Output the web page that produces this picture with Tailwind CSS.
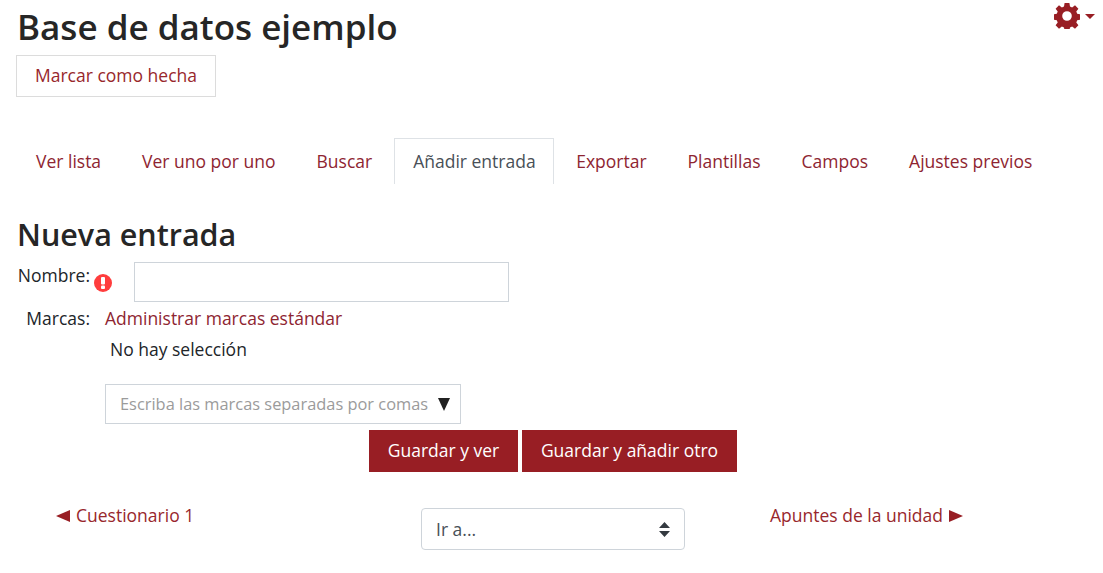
<!DOCTYPE html>
<html lang="es">
<head>
    <meta charset="UTF-8">
    <title>Base de datos ejemplo</title>
    <script src="https://cdn.jsdelivr.net/npm/@tailwindcss/browser@4"></script>
</head>
<body class="bg-white font-['Open_Sans',sans-serif] text-[17.5px] leading-[26px] text-[#212529] overflow-hidden">
<div class="w-[1103px] h-[573px] pl-[16px] relative">

    <!-- Activity menu -->
    <div class="absolute top-[3px] left-[1054px] flex items-center gap-[5px] text-[#981e24]">
        <svg class="w-[26px] h-[26px]" viewBox="0 0 26 26" fill="currentColor">
            <path fill-rule="evenodd" d="M10.6 0h4.8l.6 3.5 2.1.9 2.9-2.1 3.4 3.4-2.1 2.9.9 2.1 2.8.6v5.4l-2.8.6-.9 2.1 2.1 2.9-3.4 3.4-2.9-2.1-2.1.9-.6 3.5h-4.8l-.6-3.5-2.1-.9-2.9 2.1-3.4-3.4 2.1-2.9-.9-2.1-2.8-.6v-5.4l2.8-.6.9-2.1-2.1-2.9 3.4-3.4 2.9 2.1 2.1-.9zM13 8.2a4.8 4.8 0 1 0 0 9.6 4.8 4.8 0 0 0 0-9.6z"/>
        </svg>
        <span class="w-0 h-0 border-x-[5px] border-x-transparent border-t-[5px] border-t-[#981e24]"></span>
    </div>

    <h1 class="pt-[5px] pl-[1px] text-[35px] leading-[44px] font-semibold text-[#262626]">Base de datos ejemplo</h1>
    <a class="mt-[6px] flex items-center justify-center w-[200px] h-[42px] pb-[2px] border border-[#dcdcdc] text-[#98272c]">Marcar como hecha</a>

    <!-- Tabs -->
    <nav class="mt-[41px] flex h-[46px]">
        <a class="px-[20px] pt-[10px] text-[#8e2531]">Ver lista</a>
        <a class="px-[21px] pt-[10px] text-[#8e2531]">Ver uno por uno</a>
        <a class="px-[20px] pt-[10px] text-[#8e2531]">Buscar</a>
        <a class="w-[160px] pl-[18px] pt-[9px] ml-[2px] border border-b-0 border-[#dee2e6] text-[#495057]">Añadir entrada</a>
        <a class="px-[22px] pt-[10px] text-[#8e2531]">Exportar</a>
        <a class="px-[19px] pt-[10px] text-[#8e2531]">Plantillas</a>
        <a class="px-[22px] pt-[10px] text-[#8e2531]">Campos</a>
        <a class="px-[19px] pt-[10px] text-[#8e2531]">Ajustes previos</a>
    </nav>

    <h2 class="mt-[30px] pl-[1px] text-[30.5px] leading-[40px] font-semibold text-[#262626]">Nueva entrada</h2>

    <!-- Form -->
    <div class="mt-[8px] flex h-[40px]">
        <label class="w-[74px] text-right">Nombre:</label>
        <svg class="ml-[4px] mt-[12px] w-[18px] h-[18px]" viewBox="0 0 18 18">
            <circle cx="9" cy="9" r="9" fill="#ff3d3d"/>
            <rect x="7" y="3" width="4" height="7.6" rx="1" fill="#fff"/>
            <rect x="7" y="11.6" width="4" height="3.4" rx="1" fill="#fff"/>
        </svg>
        <div class="ml-[22px] w-[375px] h-[40px] border border-[#ced4da]"></div>
    </div>
    <div class="mt-[3px] flex">
        <label class="w-[74px] text-right">Marcas:</label>
        <a class="ml-[15px] text-[#8e2531]">Administrar marcas estándar</a>
    </div>
    <p class="mt-[5px] ml-[94px]">No hay selección</p>
    <div class="mt-[22px] ml-[89px] w-[356px] h-[40px] border border-[#ced4da] flex items-center pl-[14px] text-[16.4px] text-[#9b9b9b]">
        <span>Escriba las marcas separadas por comas</span>
        <span class="ml-[10px] w-0 h-0 border-x-[6px] border-x-transparent border-t-[13px] border-t-[#212121]"></span>
    </div>
    <div class="mt-[6px] ml-[353px] flex gap-[4px] text-white">
        <button class="w-[149px] h-[42px] pb-[2px] bg-[#981e24]">Guardar y ver</button>
        <button class="w-[215px] h-[42px] pb-[2px] bg-[#981e24]">Guardar y añadir otro</button>
    </div>

    <!-- Activity navigation -->
    <div class="mt-[36px] flex items-start">
        <a class="ml-[40px] w-[365px] -mt-[6px] flex items-center gap-[6px] text-[#98272c]">
            <span class="mt-[2px] w-0 h-0 border-y-[6.5px] border-y-transparent border-r-[14px] border-r-[#981e24]"></span>
            <span>Cuestionario 1</span>
        </a>
        <div class="w-[264px] h-[42px] border border-[#ced4da] rounded-[4px] flex items-center justify-between pl-[14px] pr-[14px] text-[#495057]">
            <span>Ir a...</span>
            <svg class="w-[11px] h-[15px]" viewBox="0 0 11 15" fill="#343a40"><path d="M5.5 0 11 6H0zM5.5 15 0 9h11z"/></svg>
        </div>
        <a class="ml-[85px] -mt-[6px] flex items-center gap-[6px] text-[#98272c]">
            <span>Apuntes de la unidad</span>
            <span class="mt-[2px] w-0 h-0 border-y-[6.5px] border-y-transparent border-l-[14px] border-l-[#981e24]"></span>
        </a>
    </div>
</div>
</body>
</html>
